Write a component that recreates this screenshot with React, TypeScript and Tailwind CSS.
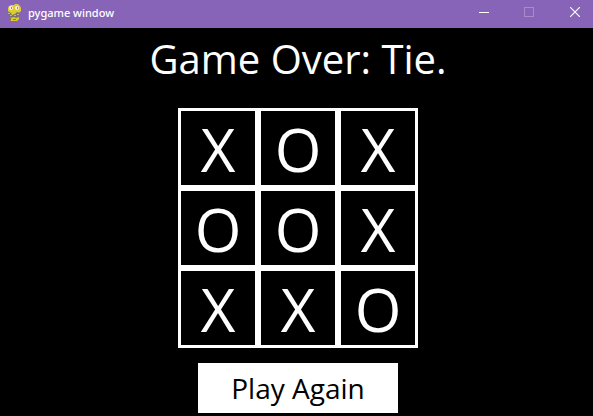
import { useState } from "react"

const finishedBoard = ["X", "O", "X", "O", "O", "X", "X", "X", "O"]

function SnakeIcon() {
  return (
    <svg width="16" height="18" viewBox="0 0 16 18" aria-hidden="true">
      <path
        d="M3 2 L5 1 L8 1 L9 0 L12 0 L14 2 L15 4 L15 7 L13 9 L13 15 L11 17 L5 17 L4 15 L4 9 L2 7 L2 4 Z"
        fill="#e0cc28"
      />
      <path d="M1 9 L3 8 L5 9 L6 11 L9 10 L11 8 L14 9 L13 13 L10 14 L8 13 L5 14 L3 12 L1 12 Z" fill="#77737a" />
      <path d="M2 9h2v1h-2z M4 11h2v1h-2z M8 11h2v1h-2z M11 10h2v1h-2z" fill="#b5b0b8" />
      <path d="M3 14h2v2h-2z M7 15h3v1h-3z" fill="#8d7d20" />
      <rect x="3" y="2" width="4" height="4" rx="2" fill="#f1eef4" />
      <rect x="9" y="2" width="4" height="4" rx="2" fill="#f1eef4" />
      <path d="M5 3h1v2h-1z M11 3h1v2h-1z" fill="#8f8a94" />
    </svg>
  )
}

function TitleBar() {
  return (
    <header className="flex h-7 items-start bg-[#8764b8] pl-1.5 text-white">
      <div className="flex h-[26px] items-center gap-1.5">
        <SnakeIcon />
        <span className="font-['Noto_Sans',sans-serif] text-[11px] font-medium">pygame window</span>
      </div>
      <div className="ml-auto flex h-6">
        <button type="button" aria-label="Minimize" className="flex w-11 items-center justify-center">
          <svg width="10" height="10" viewBox="0 0 10 10" shapeRendering="crispEdges">
            <path d="M0 5h10v1h-10z" fill="currentColor" />
          </svg>
        </button>
        <button type="button" aria-label="Maximize" disabled className="flex w-[46px] items-center justify-center">
          <svg width="10" height="10" viewBox="0 0 10 10" fill="none" stroke="#a78bcd">
            <rect x="0.5" y="0.5" width="9" height="9" />
          </svg>
        </button>
        <button type="button" aria-label="Close" className="flex w-[41px] items-center justify-center pl-[5px]">
          <svg width="10" height="10" viewBox="0 0 10 10" stroke="currentColor" strokeWidth="1.1">
            <path d="M0 0L10 10M10 0L0 10" />
          </svg>
        </button>
      </div>
    </header>
  )
}

export default function App() {
  const [board, setBoard] = useState(finishedBoard)
  const isOver = board.every((mark) => mark !== "")

  const play = (index: number) => {
    if (board[index] !== "") return
    const turn = board.filter((mark) => mark !== "").length % 2 === 0 ? "X" : "O"
    setBoard(board.map((mark, i) => (i === index ? turn : mark)))
  }

  return (
    <div className="flex min-h-screen flex-col bg-black font-['Open_Sans',sans-serif] text-white">
      <TitleBar />
      <main className="flex flex-col items-center pl-[3px]">
        <h1 className="mb-[18px] text-[40px] leading-[62px]">{isOver ? "Game Over: Tie." : "Tic Tac Toe"}</h1>
        <div className="grid grid-cols-3">
          {board.map((mark, index) => (
            <button
              key={index}
              type="button"
              aria-label={`Square ${index + 1} ${mark}`}
              onClick={() => play(index)}
              className="flex size-20 items-center justify-center border-3 border-white pt-0.5 text-6xl"
            >
              {mark}
            </button>
          ))}
        </div>
        <button
          type="button"
          onClick={() => setBoard(Array(9).fill(""))}
          className="mt-[15px] h-[50px] w-[200px] bg-white text-[28px] text-black"
        >
          Play Again
        </button>
      </main>
    </div>
  )
}
